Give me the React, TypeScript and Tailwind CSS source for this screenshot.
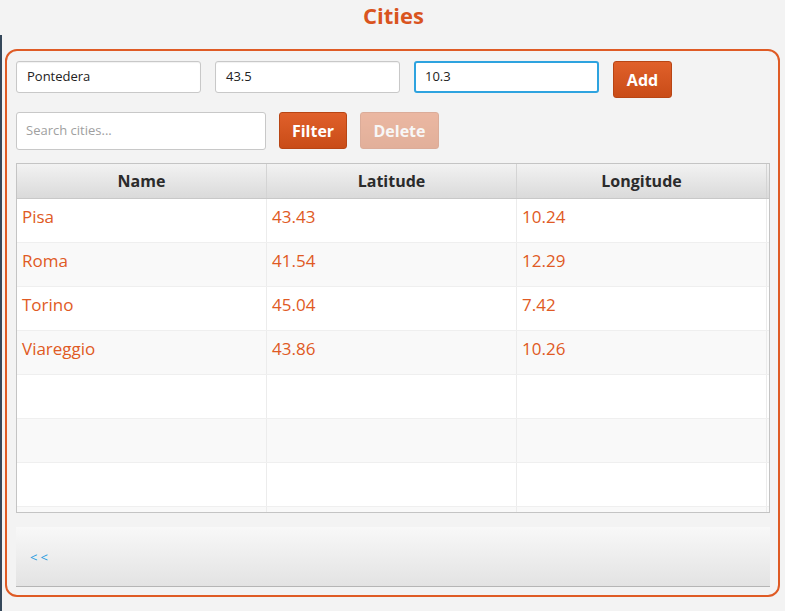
import React from 'react';

type City = { name: string; lat: string; lon: string };

const cities: City[] = [
  { name: 'Pisa', lat: '43.43', lon: '10.24' },
  { name: 'Roma', lat: '41.54', lon: '12.29' },
  { name: 'Torino', lat: '45.04', lon: '7.42' },
  { name: 'Viareggio', lat: '43.86', lon: '10.26' },
];

const font = { fontFamily: '"Open Sans", "Noto Sans", sans-serif' };

const TextBox = ({ value, focused }: { value: string; focused?: boolean }) => (
  <div
    className={`w-[185px] h-[32px] rounded-[3px] bg-white flex items-center text-[13px] text-[#222] ${
      focused ? 'border-2 border-[#2ea3df] px-[9px]' : 'border border-[#c8c8c8] px-[10px] shadow-[inset_0_1px_1px_rgba(0,0,0,0.06)]'
    }`}
  >
    {value}
  </div>
);

const OrangeButton = ({ label, w, disabled }: { label: string; w: string; disabled?: boolean }) => (
  <div
    className={`${w} h-[37px] rounded-[3px] border border-[#b84514] bg-gradient-to-b from-[#e0602a] to-[#c94c17] text-white font-bold text-[16px] flex items-center justify-center ${
      disabled ? 'opacity-40' : ''
    }`}
  >
    {label}
  </div>
);

export default function App() {
  const emptyRows = 4;
  return (
    <div className="w-[785px] h-[611px] bg-[#f3f3f3] flex overflow-hidden" style={font}>
      {/* sliver of the window behind */}
      <div className="w-[2px] flex flex-col">
        <div className="h-[35px] bg-[#f3f3f3]" />
        <div className="flex-1 bg-[#35475a]" />
      </div>

      <div className="flex-1 flex flex-col">
        <div className="h-[30px] flex items-center justify-center">
          <h1 className="text-[22px] font-bold text-[#d9541e] leading-none">Cities</h1>
        </div>

        <div className="mt-[19px] ml-[3px] w-[775px] h-[548px] border-2 border-[#df5b25] rounded-[12px] px-[9px] pt-[10px] flex flex-col">
          {/* add row */}
          <div className="flex items-start gap-[14px]">
            <TextBox value="Pontedera" />
            <TextBox value="43.5" />
            <TextBox value="10.3" focused />
            <OrangeButton label="Add" w="w-[59px]" />
          </div>

          {/* filter row */}
          <div className="flex items-start gap-[13px] mt-[14px]">
            <div className="w-[250px] h-[38px] rounded-[3px] bg-white border border-[#c8c8c8] flex items-center px-[9px] text-[13px] text-[#a0a0a0]">
              Search cities...
            </div>
            <OrangeButton label="Filter" w="w-[68px]" />
            <OrangeButton label="Delete" w="w-[79px]" disabled />
          </div>

          {/* table */}
          <div className="mt-[13px] w-[754px] h-[350px] shrink-0 border border-[#c4c4c4] bg-white flex flex-col overflow-hidden">
            <div className="h-[35px] shrink-0 flex bg-gradient-to-b from-[#f2f2f2] to-[#dadada] border-b border-[#c8c8c8]">
              {['Name', 'Latitude', 'Longitude'].map((h) => (
                <div
                  key={h}
                  className="w-[250px] flex items-center justify-center font-bold text-[16px] text-[#2b2b2b] border-r border-[#d4d4d4]"
                >
                  {h}
                </div>
              ))}
              <div className="flex-1" />
            </div>
            {cities.map((c, i) => (
              <div
                key={c.name}
                className={`h-[44px] shrink-0 flex border-b border-[#efefef] text-[17px] text-[#e05a24] ${
                  i % 2 === 0 ? 'bg-white' : 'bg-[#f9f9f9]'
                }`}
              >
                {[c.name, c.lat, c.lon].map((v, j) => (
                  <div key={j} className="w-[250px] flex items-center pl-[5px] pb-[8px] border-r border-[#ececec]">
                    {v}
                  </div>
                ))}
              </div>
            ))}
            {Array.from({ length: emptyRows }).map((_, i) => (
              <div
                key={i}
                className={`h-[44px] shrink-0 flex border-b border-[#efefef] ${
                  (i + cities.length) % 2 === 0 ? 'bg-white' : 'bg-[#f9f9f9]'
                }`}
              >
                <div className="w-[250px] border-r border-[#ececec]" />
                <div className="w-[250px] border-r border-[#ececec]" />
                <div className="w-[250px] border-r border-[#ececec]" />
              </div>
            ))}
          </div>

          {/* pagination bar */}
          <div className="mt-[14px] w-[754px] h-[60px] shrink-0 bg-gradient-to-b from-[#f8f8f8] to-[#e3e3e3] border-b border-[#b5b5b5] flex items-center pl-[14px] pt-[2px]">
            <span className="text-[13px] text-[#1e9be0] tracking-[3px]">&lt;&lt;</span>
          </div>
        </div>
      </div>
    </div>
  );
}
